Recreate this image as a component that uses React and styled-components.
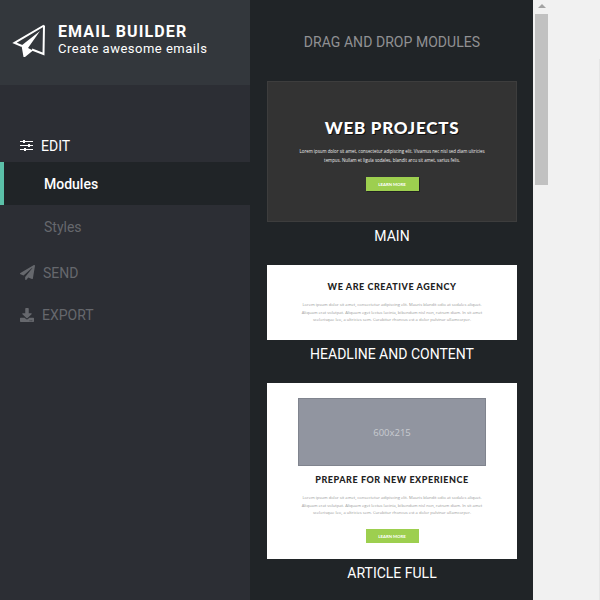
import styled, { createGlobalStyle } from "styled-components";
import { FaPaperPlane, FaDownload } from "react-icons/fa";

const lorem1 = [
  "Lorem ipsum dolor sit amet, consectetur adipiscing elit. Vivamus nec nisl sed diam ultricies",
  "tempus. Nullam et ligula sodales, blandit arcu sit amet, varius felis.",
];
const lorem2 = [
  "Lorem ipsum dolor sit amet, consectetur adipiscing elit. Mauris blandit odio at sodales aliquet.",
  "Aliquam erat volutpat. Aliquam eget lectus lacinia, bibendum nisl non, rutrum diam. In sit amet",
  "scelerisque leo, a ultricies sem. Curabitur rhoncus est a dolor pulvinar ullamcorper.",
];

export default function App() {
  return (
    <>
      <GlobalStyle />
      <Page>
        <Sidebar>
          <Brand>
            <PlaneLogo />
            <BrandText>
              <BrandTitle>EMAIL BUILDER</BrandTitle>
              <BrandSub>Create awesome emails</BrandSub>
            </BrandText>
          </Brand>

          <Nav>
            <NavHead $active>
              <SlidersIcon />
              EDIT
            </NavHead>
            <SubItem $active>Modules</SubItem>
            <SubItem>Styles</SubItem>
            <NavHead $top={14}>
              <FaPaperPlane size={15} />
              SEND
            </NavHead>
            <NavHead $top={21}>
              <FaDownload size={14} />
              EXPORT
            </NavHead>
          </Nav>
        </Sidebar>

        <Modules>
          <ModulesTitle>DRAG AND DROP MODULES</ModulesTitle>

          <Thumb $dark $height={141} $pad={37}>
            <HeroTitle>WEB PROJECTS</HeroTitle>
            <LoremBlock $light $top={10} $size={4.4} $line={9}>
              {lorem1.map((line) => (
                <div key={line}>{line}</div>
              ))}
            </LoremBlock>
            <LearnMore $top={12} $shadow>LEARN MORE</LearnMore>
          </Thumb>
          <ThumbLabel>MAIN</ThumbLabel>

          <Thumb $height={75} $pad={16}>
            <ThumbTitle>WE ARE CREATIVE AGENCY</ThumbTitle>
            <LoremBlock $top={9}>
              {lorem2.map((line) => (
                <div key={line}>{line}</div>
              ))}
            </LoremBlock>
          </Thumb>
          <ThumbLabel>HEADLINE AND CONTENT</ThumbLabel>

          <Thumb $height={176} $pad={15}>
            <Placeholder>600x215</Placeholder>
            <ThumbTitle $top={8}>PREPARE FOR NEW EXPERIENCE</ThumbTitle>
            <LoremBlock $top={9}>
              {lorem2.map((line) => (
                <div key={line}>{line}</div>
              ))}
            </LoremBlock>
            <LearnMore $top={12.5}>LEARN MORE</LearnMore>
          </Thumb>
          <ThumbLabel>ARTICLE FULL</ThumbLabel>
        </Modules>

        <ScrollTrack>
          <ScrollArrow />
          <ScrollThumb />
        </ScrollTrack>
        <Gutter />
      </Page>
    </>
  );
}

function PlaneLogo() {
  return (
    <svg width="34" height="34" viewBox="0 0 34 34" fill="none">
      <path
        d="M32 1.5 L2.5 18.8 L10 22 M32 1.5 L31.5 30 L20 25.5"
        stroke="#fff"
        strokeWidth="2"
      />
      <path d="M9.5 21.5 L28 7 L16 24 L21 26.5 L13 33 L11.5 33 Z" fill="#fff" />
    </svg>
  );
}

function SlidersIcon() {
  return (
    <svg width="14" height="12" viewBox="0 0 14 12">
      <g fill="#fff">
        <rect x="0" y="1" width="13" height="1" />
        <rect x="0" y="5" width="13" height="1" />
        <rect x="0" y="9" width="13" height="1" />
        <rect x="3" y="0" width="2" height="3" />
        <rect x="8" y="4" width="2" height="3" />
        <rect x="4" y="8" width="2" height="3" />
      </g>
    </svg>
  );
}

// ---------- Styles ----------

const GlobalStyle = createGlobalStyle`
  html, body {
    margin: 0;
    height: 600px;
    overflow: hidden;
    background: #f1f1f1;
  }
`;

const Page = styled.div`
  display: flex;
  width: 600px;
  height: 600px;
  overflow: hidden;
  font-family: Roboto, "Liberation Sans", sans-serif;
`;

const Sidebar = styled.aside`
  width: 250px;
  flex: none;
  background: #2c2e34;
`;

const Brand = styled.div`
  height: 85px;
  box-sizing: border-box;
  padding: 24px 0 0 12px;
  display: flex;
  gap: 12px;
  background: #33373c;
`;

const BrandText = styled.div`
  color: #fff;
`;

const BrandTitle = styled.div`
  font-size: 16px;
  line-height: 16px;
  font-weight: 700;
  letter-spacing: 1.1px;
`;

const BrandSub = styled.div`
  margin-top: 1px;
  font-size: 13px;
  line-height: 16px;
  letter-spacing: 0.5px;
`;

const Nav = styled.nav`
  padding-top: 50px;
`;

const NavHead = styled.div`
  display: flex;
  align-items: center;
  gap: ${(p) => (p.$active ? 7 : 8)}px;
  height: 21px;
  margin-top: ${(p) => p.$top || 0}px;
  margin-bottom: ${(p) => (p.$active ? 6 : 0)}px;
  padding-left: 20px;
  font-size: 14px;
  color: ${(p) => (p.$active ? "#fff" : "#66686d")};

  svg {
    flex: none;
  }
`;

const SubItem = styled.div`
  height: 43px;
  display: flex;
  align-items: center;
  box-sizing: border-box;
  padding-left: ${(p) => (p.$active ? 40 : 44)}px;
  font-size: 14px;
  font-weight: ${(p) => (p.$active ? 500 : 400)};
  color: ${(p) => (p.$active ? "#fff" : "#66686d")};
  background: ${(p) => (p.$active ? "#202427" : "transparent")};
  border-left: ${(p) => (p.$active ? "4px solid #5bc0a8" : "none")};
`;

const Modules = styled.main`
  width: 283px;
  flex: none;
  box-sizing: border-box;
  padding: 0 16px 0 17px;
  background: #202427;
`;

const ModulesTitle = styled.h2`
  margin: 0;
  height: 81px;
  box-sizing: border-box;
  padding-top: 34px;
  text-align: center;
  font-size: 14px;
  line-height: 16px;
  font-weight: 400;
  letter-spacing: 0.05px;
  color: #909193;
`;

const Thumb = styled.div`
  width: 250px;
  height: ${(p) => p.$height}px;
  box-sizing: border-box;
  display: flex;
  flex-direction: column;
  align-items: center;
  padding-top: ${(p) => p.$pad}px;
  background: ${(p) => (p.$dark ? "#333333" : "#fff")};
  border: ${(p) => (p.$dark ? "1px solid #3d3d3d" : "none")};
`;

const ThumbLabel = styled.div`
  height: 43px;
  box-sizing: border-box;
  padding-top: 6px;
  text-align: center;
  font-size: 14px;
  line-height: 16px;
  color: #fff;
`;

const HeroTitle = styled.div`
  font-family: Lato, sans-serif;
  font-weight: 900;
  font-size: 17px;
  line-height: 18px;
  letter-spacing: 0.75px;
  color: #fff;
  text-shadow: 1px 1px 0 #111;
`;

const ThumbTitle = styled.div`
  margin-top: ${(p) => p.$top || 0}px;
  font-family: Lato, sans-serif;
  font-weight: 900;
  font-size: 9px;
  line-height: 11px;
  letter-spacing: 0.55px;
  color: #222;
`;

const LoremBlock = styled.div`
  margin-top: ${(p) => p.$top}px;
  font-family: "Open Sans", sans-serif;
  font-size: ${(p) => p.$size || 4.1}px;
  line-height: ${(p) => p.$line || 7.5}px;
  text-align: center;
  white-space: nowrap;
  color: ${(p) => (p.$light ? "#eeeeee" : "#9a9a9a")};
`;

const LearnMore = styled.div`
  margin-top: ${(p) => p.$top}px;
  width: 53px;
  height: 14px;
  flex: none;
  display: flex;
  align-items: center;
  justify-content: center;
  font-family: Lato, sans-serif;
  font-weight: 700;
  font-size: 4.3px;
  color: #fff;
  background: #9dcf4f;
  box-shadow: ${(p) => (p.$shadow ? "1px 1px 0 #222" : "none")};
`;

const Placeholder = styled.div`
  width: 188px;
  height: 68px;
  flex: none;
  box-sizing: border-box;
  display: flex;
  align-items: center;
  justify-content: center;
  font-family: "Open Sans", sans-serif;
  font-size: 9.5px;
  color: #c8cbd0;
  background: #9195a0;
  border: 1px solid #80848e;
`;

const ScrollTrack = styled.div`
  width: 17px;
  flex: none;
  box-sizing: border-box;
  padding: 4px 2px 0;
  background: #f1f1f1;
`;

const ScrollArrow = styled.div`
  width: 0;
  height: 0;
  margin: 0 auto 6px;
  border-left: 4px solid transparent;
  border-right: 4px solid transparent;
  border-bottom: 4px solid #a3a3a3;
`;

const ScrollThumb = styled.div`
  width: 13px;
  height: 171px;
  background: #c1c1c1;
`;

const Gutter = styled.div`
  flex: 1;
  margin-top: 59px;
  background: #f1f1f1;
  border-right: 1px solid #e6e6e6;
`;
